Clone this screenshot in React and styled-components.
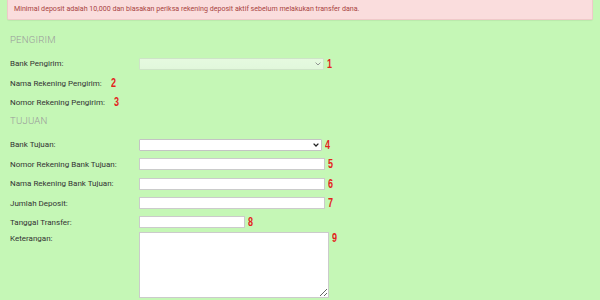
import React from 'react';
import styled, { createGlobalStyle } from 'styled-components';

const GlobalStyle = createGlobalStyle`
  html, body {
    margin: 0;
    padding: 0;
    background: #c5f7b6;
    font-family: Roboto, "Liberation Sans", Arial, sans-serif;
    overflow: hidden;
  }
`;

const Page = styled.div`
  width: 600px;
  height: 300px;
  padding: 0 7px;
  box-sizing: border-box;
  overflow: hidden;
`;

const Alert = styled.div`
  background: #fadddd;
  border: 1px solid #efc9c9;
  border-top: none;
  border-radius: 0 0 2px 2px;
  box-shadow: 0 1px 1px rgba(0, 0, 0, 0.06);
  color: #a94442;
  font-size: 7.1px;
  padding: 3px 6px 5px;
  height: 11px;
  line-height: 11px;
`;

const Form = styled.div`
  padding: 0 3px;
`;

const Heading = styled.div`
  color: #9a9a9a;
  font-weight: 300;
  font-size: 9.6px;
  letter-spacing: 0.2px;
  height: 23px;
  line-height: 18px;
  margin-top: ${(p) => p.top || 0}px;
`;

const Row = styled.div`
  display: grid;
  grid-template-columns: 129px auto;
  align-items: ${(p) => (p.top ? 'start' : 'center')};
  min-height: 19.4px;
`;

const Label = styled.div`
  font-size: 8px;
  color: #333;
  display: flex;
  align-items: center;
  gap: 9px;
  padding-top: ${(p) => (p.top ? 2 : 0)}px;
`;

const Field = styled.div`
  display: flex;
  align-items: ${(p) => (p.top ? 'flex-start' : 'center')};
  gap: 3px;
`;

const Marker = styled.span`
  display: inline-block;
  color: #e3241c;
  font-family: "Liberation Sans", sans-serif;
  font-weight: bold;
  font-size: 12.5px;
  line-height: 12px;
  width: 6px;
  transform: scaleX(0.72);
  transform-origin: left center;
`;

const SelectWrap = styled.div`
  position: relative;
  width: ${(p) => p.w}px;
  height: 12px;
`;

const Select = styled.select`
  appearance: none;
  width: 100%;
  height: 12px;
  font-size: 7px;
  padding: 0;
  margin: 0;
  border: 1px solid ${(p) => (p.disabled ? '#d3dcd0' : '#c4c4c4')};
  border-radius: 1px;
  background: ${(p) => (p.disabled ? 'linear-gradient(#f4fbf2, #eef8ec)' : '#ffffff')};
  color: #333;
  box-sizing: border-box;
  display: block;
`;

const Chevron = styled.svg`
  position: absolute;
  right: 3px;
  top: 4px;
  width: 6px;
  height: 4px;
  pointer-events: none;
`;

const Input = styled.input`
  width: ${(p) => p.w}px;
  height: 12px;
  font-size: 7px;
  padding: 0 2px;
  margin: 0;
  border: 1px solid #cbcbcb;
  background: #fff;
  box-sizing: border-box;
  outline: none;
  display: block;
`;

const TextArea = styled.textarea`
  width: 190px;
  height: 66px;
  padding: 0;
  margin: 0;
  border: 1px solid #cbcbcb;
  background: #fff;
  box-sizing: border-box;
  resize: both;
  display: block;
`;

const Filler = styled.div`
  height: 10px;
`;

const inputs = [
  { label: 'Nomor Rekening Bank Tujuan:', w: 186, n: 5 },
  { label: 'Nama Rekening Bank Tujuan:', w: 186, n: 6 },
  { label: 'Jumlah Deposit:', w: 186, n: 7 },
  { label: 'Tanggal Transfer:', w: 106, n: 8 },
];

function Dropdown({ w, disabled }) {
  return (
    <SelectWrap w={w}>
      <Select disabled={disabled}>
        <option></option>
      </Select>
      <Chevron viewBox="0 0 6 4">
        <path
          d="M0.6 0.6 L3 3 L5.4 0.6"
          fill="none"
          stroke={disabled ? '#8a8a8a' : '#222'}
          strokeWidth={disabled ? 0.9 : 1.3}
        />
      </Chevron>
    </SelectWrap>
  );
}

export default function App() {
  return (
    <Page>
      <GlobalStyle />
      <Alert>
        Minimal deposit adalah 10,000 dan biasakan periksa rekening deposit aktif sebelum melakukan transfer dana.
      </Alert>
      <Form>
        <Heading top={11}>PENGIRIM</Heading>
        <Row>
          <Label>Bank Pengirim:</Label>
          <Field>
            <Dropdown w={185} disabled />
            <Marker>1</Marker>
          </Field>
        </Row>
        <Row>
          <Label>
            Nama Rekening Pengirim: <Marker>2</Marker>
          </Label>
        </Row>
        <Row>
          <Label>
            Nomor Rekening Pengirim: <Marker>3</Marker>
          </Label>
        </Row>
        <Heading top={0}>TUJUAN</Heading>
        <Row>
          <Label>Bank Tujuan:</Label>
          <Field>
            <Dropdown w={183} />
            <Marker>4</Marker>
          </Field>
        </Row>
        {inputs.map((f) => (
          <Row key={f.n}>
            <Label>{f.label}</Label>
            <Field>
              <Input w={f.w} />
              <Marker>{f.n}</Marker>
            </Field>
          </Row>
        ))}
        <Row top>
          <Label top>Keterangan:</Label>
          <Field top>
            <TextArea />
            <Marker>9</Marker>
          </Field>
        </Row>
        <Filler />
      </Form>
    </Page>
  );
}
